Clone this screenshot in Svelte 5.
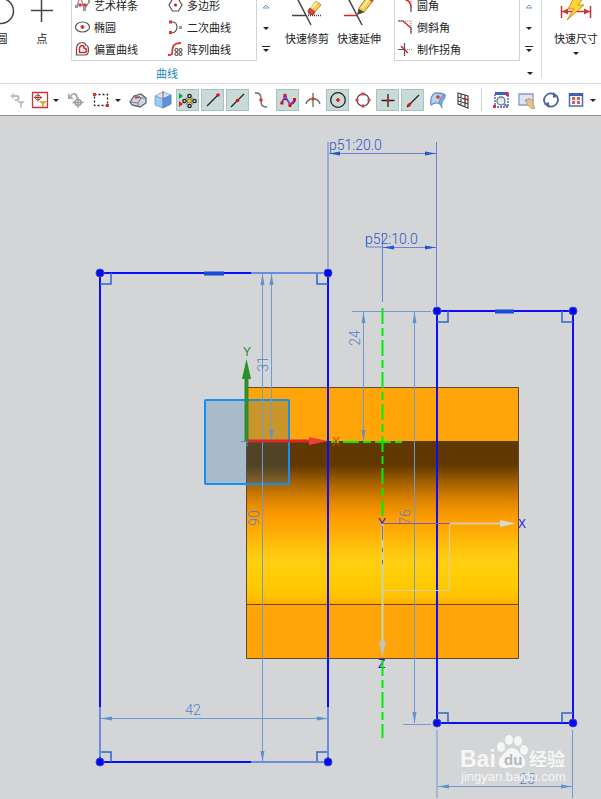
<script lang="ts">
	type Item = { icon: string; label: string };
	type Tool = { icon: string; label: string; active?: boolean; narrow?: boolean; menu?: boolean };

	const curves: Item[] = [
		{ icon: 'spline', label: '艺术样条' },
		{ icon: 'polygon', label: '多边形' },
		{ icon: 'ellipse', label: '椭圆' },
		{ icon: 'conic', label: '二次曲线' },
		{ icon: 'offset', label: '偏置曲线' },
		{ icon: 'pattern', label: '阵列曲线' }
	];

	const corners: Item[] = [
		{ icon: 'fillet', label: '圆角' },
		{ icon: 'chamfer', label: '倒斜角' },
		{ icon: 'corner', label: '制作拐角' }
	];

	const tools: Tool[] = [
		{ icon: 'resetFilter', label: '重置过滤器', narrow: true },
		{ icon: 'filter', label: '选择过滤器', narrow: true, menu: true },
		{ icon: 'undoPoint', label: '撤消选择' },
		{ icon: 'marquee', label: '矩形选择', menu: true },
		{ icon: 'solid', label: '实体' },
		{ icon: 'cube', label: '体' },
		{ icon: 'snap', label: '启用捕捉点', active: true },
		{ icon: 'endpoint', label: '端点', active: true },
		{ icon: 'midpoint', label: '中点', active: true },
		{ icon: 'control', label: '控制点' },
		{ icon: 'pole', label: '极点', active: true },
		{ icon: 'intersect', label: '交点' },
		{ icon: 'center', label: '圆弧中心', active: true },
		{ icon: 'quadrant', label: '象限点' },
		{ icon: 'existing', label: '现有点', active: true },
		{ icon: 'onCurve', label: '曲线上的点', active: true },
		{ icon: 'onFace', label: '面上的点' },
		{ icon: 'grid', label: '栅格点' }
	];

	const viewTools: Tool[] = [
		{ icon: 'fit', label: '适合窗口' },
		{ icon: 'pan', label: '平移' },
		{ icon: 'rotate', label: '旋转' },
		{ icon: 'window', label: '窗口', menu: true }
	];

	const frames = [
		{ left: 100, right: 328, top: 273, bottom: 762 },
		{ left: 437, right: 573, top: 311, bottom: 723 }
	];
</script>

{#snippet caret(bar = false, dim = false)}
	<svg class="caret" class:dim viewBox="0 0 8 8" aria-hidden="true">
		{#if bar}<path d="M0 0h8v1H0z" />{/if}
		{#if dim}<path d="M1 6h6L4 3z" />{:else}<path d="M1 3h6L4 6z" />{/if}
	</svg>
{/snippet}

{#snippet scroller(name: string)}
	<div class="scroller">
		<button aria-label="{name} 上一行">{@render caret(false, true)}</button>
		<button aria-label="{name} 下一行">{@render caret()}</button>
		<button aria-label="{name} 更多">{@render caret(true)}</button>
	</div>
{/snippet}

{#snippet itemIcon(name: string)}
	<svg class="item-icon" viewBox="0 0 16 16" fill="none" stroke="#555" stroke-width="1.2" aria-hidden="true">
		{#if name === 'spline'}
			<path d="M1 9C4 8 3 2 5 2s2 4 4 9c1 2 3-4 6-7" stroke="#888" />
			<path d="M0 8h3v3H0zM8 11h3v3H8zM13 3h2v3h-2z" fill="#999" stroke="none" />
			<path d="m5 8 5 0" stroke="#d33" />
			<circle cx="5" cy="8" r="1.7" fill="#d33" stroke="none" />
			<circle cx="10" cy="8" r="1.7" fill="#d33" stroke="none" />
		{:else if name === 'polygon'}
			<path d="M4.5 2h6L14 8l-3.500 6h-6L1 8z" />
			<circle cx="7.500" cy="8" r="1.6" fill="#c22" stroke="none" />
		{:else if name === 'ellipse'}
			<ellipse cx="7.500" cy="8" rx="7" ry="5" />
			<path d="M7.500 6v4M5.500 8h4" stroke="#c22" stroke-width="1.600" />
		{:else if name === 'conic'}
			<path d="M4 3c3 0 5 2 5 5s-2 6-5 6" />
			<path d="M1 1.500h3v3H1zM1 12h3v3H1z" fill="#d33" stroke="none" />
			<path d="M11 7h3v3h-3z" fill="#999" stroke="none" />
		{:else if name === 'offset'}
			<path d="M1.500 14V8c0-4 2-6.500 6-6.500 2 0 3 1 3.500 3 2 0 2.500 2 2.500 4.500s-1 5-3.500 5z" />
			<path d="M4.500 11.500V8c0-2 1-3.500 3-3.500 1 0 1.500 1 1.500 2.500 2 0 2.500 1 2.500 2.500s-1 2-2 2z" stroke="#d22" stroke-width="1.500" />
		{:else if name === 'pattern'}
			<path d="M0 14c5 0 4-1 4.500-6S8 2 13 2" stroke="#d33" stroke-width="1.800" />
			<circle cx="8.500" cy="9" r="1.500" /><circle cx="12.500" cy="9" r="1.500" />
			<circle cx="8.500" cy="13" r="1.500" /><circle cx="12.500" cy="13" r="1.500" />
		{:else if name === 'fillet'}
			<path d="M1 2h12v12" stroke="#888" stroke-dasharray="1 1" />
			<path d="M1 2h4M13 9v6" />
			<path d="M4 2c5 0 9 3 9 8" stroke="#d22" stroke-width="1.500" />
		{:else if name === 'chamfer'}
			<path d="M1 2h12v12" stroke="#888" stroke-dasharray="1 1" />
			<path d="M0 2h5M13 9v6" />
			<path d="m5 2 8 7" stroke="#d22" stroke-width="1.500" />
		{:else if name === 'corner'}
			<path d="M6.500 2v13M0 8.500h7" />
			<path d="M7 8.500h7" stroke="#888" stroke-dasharray="1 1" />
			<path d="m3 5 7 7" stroke="#d22" stroke-width="1.500" />
		{/if}
	</svg>
{/snippet}

{#snippet bigIcon(name: string)}
	<svg class="big-icon" viewBox="0 0 32 32" fill="none" stroke="#444" stroke-width="1.5" aria-hidden="true">
		{#if name === 'circle'}
			<circle cx="15" cy="15" r="12.500" />
		{:else if name === 'point'}
			<path d="M5 14.500h22M15.500 2v24" />
		{:else if name === 'trim'}
			<path d="m5 0 15 29M1 19.500h14" />
			<path d="M17 19.500h13" stroke-dasharray="1 1" />
			<path d="m18 14 7-9 5 4-7 8z" fill="#f5cf52" stroke="#b08a3a" stroke-width="1" />
			<path d="m20 13 6-7" stroke="#fff0a0" stroke-width="2" />
			<path d="m17 15 2-3 5 4-2 3-4-1z" fill="#d64545" stroke="#b33" stroke-width="1" />
		{:else if name === 'extend'}
			<path d="m4 0 15 29" />
			<path d="M1 19.500h13" stroke="#d22" />
			<path d="m15 18 1-6L24 1l6 4-9 11z" fill="#f8cf50" stroke="#a07830" stroke-width="1" />
			<path d="m19 12 7-9" stroke="#fff29a" stroke-width="2" />
			<path d="m14 19 2-6 5 3z" fill="#444" stroke="none" />
			<path d="m25 1 5 4" stroke="#d64545" stroke-width="3" />
		{:else if name === 'dimension'}
			<path d="M1.500 10v12M30.500 10v12M2 15.500h28" stroke="#c33" />
			<path d="m2 15.500 6-3v6zM30 15.500l-6-3v6z" fill="#c33" stroke="none" />
			<path d="m15 0-7 13h6L7 24l17-15h-6l7-9z" fill="#ffd335" stroke="#d38b20" stroke-width="1" />
		{/if}
	</svg>
{/snippet}

{#snippet toolIcon(name: string)}
	<svg class="tool-icon" viewBox="0 0 18 18" fill="none" stroke="#222" stroke-width="1.3" aria-hidden="true">
		{#if name === 'resetFilter'}
			<path d="M4 5h4c2 0 2 4 0 4H6" stroke="#bbb" stroke-width="2" />
			<path d="m1 5 4-3v6zM8 10h8l-3 3v4l-2-1v-3z" fill="#c4c4c4" stroke="none" />
		{:else if name === 'filter'}
			<path d="M1.500 1.500h15v15h-15z" fill="#fff" stroke="#cc3340" />
			<circle cx="7" cy="6.500" r="2.500" stroke="#844" stroke-width="1" />
			<path d="M7 2.500v8M3 6.500h8" stroke="#a33" stroke-width="1" />
			<path d="M8 10h8l-3 3v3l-2-1v-2z" fill="#e8a527" stroke="none" />
		{:else if name === 'undoPoint'}
			<path d="M4 5c1-3 6-3 6 2" stroke="#aaa" stroke-width="1.800" />
			<path d="M1 2v6h6z" fill="#aaa" stroke="none" />
			<circle cx="11" cy="11.500" r="3" stroke="#999" />
			<path d="M11 6v11M5.500 11.500h11" stroke="#999" />
		{:else if name === 'marquee'}
			<path d="M2.500 3.500h13v11h-13z" stroke-dasharray="2 2" />
			<path d="M1 2h3v3H1zM14 13h3v3h-3z" fill="#d33" stroke="none" />
		{:else if name === 'solid'}
			<path d="m1 11 4-6 7-2 5 4v5l-6 4-8-2z" fill="#d0d5df" stroke="#596174" />
			<path d="m1 11 8 1 3-5 5 0M9 12v4M5 5l7 2" stroke="#707a90" stroke-width="1" />
			<path d="m6 7 5-1" stroke="#c33" />
		{:else if name === 'cube'}
			<path d="m1 5 8-4 8 3-8 4z" fill="#cfe8ff" stroke="#7fa9dc" stroke-width="1" />
			<path d="M1 5v9l8 3V8z" fill="#9accf5" stroke="#7fa9dc" stroke-width="1" />
			<path d="M9 8v9l8-4V4z" fill="#5d91db" stroke="#5c88c8" stroke-width="1" />
			<path d="M9 0v8" stroke="#d33" stroke-width="1" />
		{:else if name === 'snap'}
			<path d="m0 2 4 3-4 3z" fill="#0a3" stroke="none" />
			<path d="m0 10 4 3-4 3z" fill="#d22" stroke="none" />
			<circle cx="10.500" cy="5" r="1.700" /><circle cx="10.500" cy="15" r="1.700" />
			<circle cx="5.500" cy="10" r="1.700" /><circle cx="15.500" cy="10" r="1.700" />
			<path d="m7 6.500 7 7M14 6.500l-7 7" stroke="#555" stroke-width="1" />
			<circle cx="10.500" cy="10" r="2" fill="#ffcf20" stroke="#a07a10" stroke-width="1" />
		{:else if name === 'endpoint'}
			<path d="M3 15 14 4" />
			<circle cx="14" cy="4" r="1.800" fill="#d11" stroke="none" />
		{:else if name === 'midpoint'}
			<path d="M2 16 15 3" />
			<circle cx="8.500" cy="9.500" r="1.800" fill="#d11" stroke="none" />
		{:else if name === 'control'}
			<path d="M1 2c5 0 6 1 6 7s1 7 6 7" stroke="#666" />
			<circle cx="7" cy="9" r="1.800" fill="#d33" stroke="none" />
		{:else if name === 'pole'}
			<path d="M2 13C4 7 7 7 9 10s4 5 7 0" />
			<path d="m3 12 3-8 5 10 5-6" stroke="#93c" stroke-width="1.600" />
			<path d="M1.500 10.500h3v3h-3zM4.500 3h3v3h-3zM9.500 13h3v3h-3zM14 7h3v3h-3z" fill="#d11" stroke="none" />
		{:else if name === 'intersect'}
			<path d="M9 2v14M2 13C4 6 14 6 16 13" stroke="#666" />
			<circle cx="9" cy="8" r="1.800" fill="#d33" stroke="none" />
		{:else if name === 'center'}
			<circle cx="9" cy="9" r="7.300" />
			<path d="M9 7v4M7 9h4" stroke="#d11" stroke-width="1.500" />
		{:else if name === 'quadrant'}
			<circle cx="9" cy="9" r="6" stroke="#555" />
			<path d="M7.500 1.500h3v3h-3zM7.500 13.500h3v3h-3zM1.500 7.500h3v3h-3zM13.500 7.500h3v3h-3z" fill="#d44" stroke="none" />
		{:else if name === 'existing'}
			<path d="M9 3v13M2.500 9.500h13" />
			<circle cx="9" cy="9.500" r="1.600" fill="#d11" stroke="none" />
		{:else if name === 'onCurve'}
			<path d="M3 16 15 4" />
			<circle cx="5" cy="14" r="1.800" fill="#d11" stroke="none" />
		{:else if name === 'onFace'}
			<path d="M2 14C1 8 3 3 6 2c4 0 8 0 10 2-4 1-6 5-5 9-3-2-6-1-9 1z" fill="#b5d3ee" stroke="#6b90c0" />
			<path d="m11 13 2 4c-1-4 1-8 3-10V4c-4 1-6 5-5 9z" fill="#86a9d2" stroke="#6b90c0" stroke-width="1" />
			<circle cx="9" cy="6" r="1.800" fill="#d33" stroke="none" />
		{:else if name === 'grid'}
			<path d="m4 2 10 3v12L4 13zM7 3v11M11 4v12M4 6l10 3M4 10l10 3" stroke="#444" stroke-width="1.200" />
			<circle cx="11" cy="8" r="1.600" fill="#d22" stroke="none" />
		{:else if name === 'fit'}
			<path d="M3 2h13v14H3z" stroke="#3352b5" stroke-dasharray="2 1" />
			<path d="M3 1h13v3H3z" fill="#3e61bb" stroke="none" />
			<circle cx="9" cy="10" r="4" fill="#e4eff5" stroke="#6d7b86" />
			<path d="m12 13 4 3" stroke="#6d7b86" stroke-width="2" />
			<path d="M14 2h3v3h-3zM1 14h3v3H1z" fill="#d33" stroke="none" />
		{:else if name === 'pan'}
			<path d="M2 3h14v11H2z" fill="#d9e4f6" stroke="#8c9bc5" />
			<path d="m8 9 2 1-1-2 2 1 1-2 2 2 2 0v5l2 3-3 1-4-4z" fill="#e8c48c" stroke="#c39a60" stroke-width="1" />
		{:else if name === 'rotate'}
			<path d="M3.500 13A6.500 6.500 0 0 1 12 3.500M14.500 5A6.500 6.500 0 0 1 6 14.500" stroke="#4d6496" stroke-width="1.800" />
			<path d="m11 1 5 4-5 2zM7 17l-5-4 5-2z" fill="#4d6496" stroke="none" />
		{:else if name === 'window'}
			<path d="M2.500 3h13v12h-13z" fill="#fff" stroke="#456eb5" stroke-width="1.500" />
			<path d="M2 2h14v3H2z" fill="#3e61bb" stroke="none" />
			<path d="M5 6h3v3H5zM10 6h3v3h-3zM5 10h3v3H5zM10 10h3v3h-3z" fill="#dc5a52" stroke="none" />
		{/if}
	</svg>
{/snippet}

{#snippet bigButton(icon: string, label: string)}
	<button class="big">
		{@render bigIcon(icon)}
		<span>{label}</span>
	</button>
{/snippet}

{#snippet toolButtons(list: Tool[])}
	{#each list as tool}
		<button class="tool" class:active={tool.active} class:narrow={tool.narrow} aria-label={tool.label}>
			{@render toolIcon(tool.icon)}
		</button>
		{#if tool.menu}
			<button class="tool-menu" aria-label="{tool.label} 菜单">{@render caret()}</button>
		{/if}
	{/each}
{/snippet}

<div class="app">
	<header class="ribbon">
		<section class="group">
			<div class="group-body">
				<div class="bigs primitives">
					{@render bigButton('circle', '圆')}
					{@render bigButton('point', '点')}
				</div>
				<div class="gallery two-columns">
					{#each curves as item}
						<button class="item">{@render itemIcon(item.icon)}{item.label}</button>
					{/each}
				</div>
				{@render scroller('曲线')}
				<div class="bigs edit">
					{@render bigButton('trim', '快速修剪')}
					{@render bigButton('extend', '快速延伸')}
				</div>
				<div class="gallery">
					{#each corners as item}
						<button class="item">{@render itemIcon(item.icon)}{item.label}</button>
					{/each}
				</div>
				{@render scroller('拐角')}
			</div>
			<footer class="group-footer">
				<span>曲线</span>
				<button class="tool-menu" aria-label="曲线选项">{@render caret()}</button>
			</footer>
		</section>
		<section class="group dimension">
			<button class="big with-menu">
				{@render bigIcon('dimension')}
				<span>快速尺寸</span>
				{@render caret()}
			</button>
		</section>
	</header>

	<nav class="toolbar">
		{@render toolButtons(tools)}
		<span class="divider"></span>
		{@render toolButtons(viewTools)}
	</nav>

	<main class="canvas">
		<svg class="drawing" viewBox="0 116 601 683" role="img" aria-label="草图">
			<defs>
				<linearGradient id="bore" x1="0" y1="0" x2="0" y2="1">
					<stop offset="0" stop-color="#613900" />
					<stop offset="0.150" stop-color="#613900" />
					<stop offset="0.260" stop-color="#a86300" />
					<stop offset="0.370" stop-color="#e08500" />
					<stop offset="0.460" stop-color="#fc9c00" />
					<stop offset="0.550" stop-color="#ffab05" />
					<stop offset="0.680" stop-color="#ffc80f" />
					<stop offset="0.750" stop-color="#ffcf0f" />
					<stop offset="0.900" stop-color="#ffc900" />
					<stop offset="0.960" stop-color="#ffc000" />
					<stop offset="1" stop-color="#ffac00" />
				</linearGradient>
				<marker id="arrow" viewBox="0 0 11 6" refX="11" refY="3" markerWidth="11" markerHeight="6" markerUnits="userSpaceOnUse" orient="auto-start-reverse">
					<path d="M0 1 11 3 0 5z" fill="#5b92cf" />
				</marker>
				<marker id="arrow-dark" viewBox="0 0 11 6" refX="11" refY="3" markerWidth="11" markerHeight="6" markerUnits="userSpaceOnUse" orient="auto-start-reverse">
					<path d="M0 1 11 3 0 5z" fill="#2456cc" />
				</marker>
			</defs>

			<!-- solid body -->
			<rect x="246.500" y="387.500" width="272" height="271" fill="#ffa509" />
			<rect x="247" y="441" width="271" height="163" fill="url(#bore)" />
			<path class="edge" d="M246.500 387.500h272v271h-272zM247 604.500h271" />

			<!-- datum plane -->
			<rect class="datum" x="205" y="400" width="84" height="84" rx="1" />

			<!-- coordinate system labels behind the center line -->
			<text class="axis" x="378" y="527" fill="#1414c8">Y</text>
			<text class="axis" x="378" y="668" fill="#2020dc">Z</text>

			<!-- center lines -->
			<path class="centerline" d="M382.500 308v212" />
			<path class="centerline" d="M382.500 660v78" />
			<path class="centerline level" d="M330 442h72" />

			<!-- dimensions -->
			<g class="dim">
				<path d="M101 718.500h227" marker-start="url(#arrow)" marker-end="url(#arrow)" />
				<path d="M262.500 274v488" marker-start="url(#arrow)" marker-end="url(#arrow)" />
				<path d="M271.500 274v167" marker-start="url(#arrow)" marker-end="url(#arrow)" />
				<path d="M363.500 312v129" marker-start="url(#arrow)" marker-end="url(#arrow)" />
				<path d="M414.500 312v411" marker-start="url(#arrow)" marker-end="url(#arrow)" />
				<path d="M438 786.500h134" marker-start="url(#arrow)" marker-end="url(#arrow)" />
				<path d="M352 311.500h79M403 724.500h28M437 730v68M572.500 730v68" />
			</g>
			<g class="dim dark">
				<path d="M328 142v126M436.500 142v164M366.500 236v11h16M382.500 233v69" />
				<path d="M329 153.500h107" marker-start="url(#arrow-dark)" marker-end="url(#arrow-dark)" />
				<path d="M383 247.500h53" marker-start="url(#arrow-dark)" marker-end="url(#arrow-dark)" />
			</g>
			<g class="value dark">
				<text x="329" y="150">p51:20.0</text>
				<text x="365" y="244">p52:10.0</text>
			</g>
			<g class="value" text-anchor="middle">
				<text x="193" y="715">42</text>
				<text x="527" y="784">25</text>
				<text transform="translate(268 364) rotate(-90)">31</text>
				<text transform="translate(360 338) rotate(-90)">24</text>
				<text transform="translate(259 518) rotate(-90)">90</text>
				<text transform="translate(410 517) rotate(-90)">76</text>
			</g>

			<!-- sketch profiles -->
			{#each frames as f}
				<rect class="profile" x={f.left} y={f.top} width={f.right - f.left} height={f.bottom - f.top} />
				<path
					class="square"
					d="M{f.left} {f.top + 11}h11v-11M{f.right} {f.top + 11}h-11v-11M{f.left} {f.bottom - 10}h11v10M{f.right} {f.bottom - 10}h-11v10"
				/>
				{#each [f.left, f.right] as x}
					{#each [f.top, f.bottom] as y}
						<circle class="vertex" cx={x} cy={y} r="4" />
					{/each}
				{/each}
			{/each}
			<path class="shared" d="M251 273h73M251 762h73M100 707v50M328 707v50" />
			<path class="horizontal-mark" d="M204 273.500h20M495 311.500h19" />

			<!-- sketch axes -->
			<path d="M246.500 441V378" stroke="#2f8d2f" stroke-width="4" />
			<path d="m242 379 4.500-20 4.500 20z" fill="#269226" />
			<path d="M247 441h63" stroke="#d52b2b" stroke-width="3" />
			<path d="m309 437 19 4-19 4z" fill="#ec3f3a" />
			<path d="M241 441.500h6v5" fill="none" stroke="#45a0a0" />
			<text class="axis" x="243" y="356" fill="#238a23">Y</text>
			<text class="axis" x="332" y="446" fill="#d23a20">X</text>

			<!-- work coordinate system -->
			<path d="M382.500 524v119" stroke="#c5d8b5" stroke-width="2" />
			<path d="M382.500 526v14M382.500 548v4M382.500 560v4" stroke="#7d66ba" />
			<path d="M382 523.500h68" stroke="#8452b8" />
			<path d="M450 523.500h50" stroke="#dec9ac" stroke-width="2" />
			<path d="m500 520 16 3.500-16 3.500z" fill="#d9d9d6" />
			<path d="m379 641 3.500 16 3.500-16z" fill="#c3c3c3" />
			<path d="M449.500 524v66.500h-67" fill="none" stroke="#dccfa8" />
			<text class="axis" x="518" y="528" fill="#2020dc">X</text>

			<!-- watermark -->
			<g class="watermark">
				<text class="brand" x="460" y="767">Bai</text>
				<ellipse cx="501" cy="747" rx="4" ry="5" />
				<ellipse cx="509" cy="740" rx="4" ry="5" />
				<ellipse cx="518" cy="741" rx="4" ry="5" />
				<ellipse cx="524" cy="750" rx="4" ry="5" />
				<path d="M512 748c5 0 7 5 11 9s3 11-3 11c-3 0-5-1-8-1s-5 1-8 1c-6 0-7-7-3-11s6-9 11-9z" />
				<text class="du" x="504" y="765">du</text>
				<text class="jingyan" x="529" y="766">经验</text>
				<text class="site" x="461" y="781">jingyan.baidu.com</text>
			</g>
		</svg>
	</main>
</div>

<style>
	:global(body) {
		margin: 0;
		background: #d3d5d6;
	}

	.app {
		font-family: 'Liberation Sans', 'Noto Sans CJK SC', sans-serif;
		font-size: 11px;
		color: #222;
		overflow: hidden;
	}

	button {
		margin: 0;
		padding: 0;
		border: none;
		background: transparent;
		font: inherit;
		color: inherit;
		cursor: pointer;
	}

	svg {
		display: block;
		flex: none;
	}

	/* Ribbon */
	.ribbon {
		display: flex;
		height: 83px;
		background: #fff;
		border-bottom: 1px solid #d8dadb;
		overflow: hidden;
	}

	.group {
		display: flex;
		flex-direction: column;
		flex: none;
		padding-right: 4px;
	}

	.group-body {
		display: flex;
		align-items: flex-end;
		height: 61px;
	}

	.group-footer {
		display: flex;
		align-items: center;
		justify-content: space-between;
		height: 22px;
		padding: 2px 1px 0 156px;
		box-sizing: border-box;
		color: #2086b4;
	}

	.bigs {
		display: flex;
		padding-bottom: 14px;
	}

	.primitives {
		margin-left: -18px;
		padding-right: 9px;
	}

	.edit {
		padding-left: 7px;
		padding-right: 9px;
	}

	.big {
		display: flex;
		flex-direction: column;
		align-items: center;
		gap: 3px;
		width: 40px;
		line-height: 16px;
		white-space: nowrap;
	}

	.edit .big {
		width: 52px;
	}

	.big-icon {
		width: 32px;
		height: 32px;
		overflow: visible;
	}

	.gallery {
		display: grid;
		grid-template-columns: 121px;
		grid-auto-rows: 22px;
		padding-left: 3px;
		border: 1px solid #d2d4d6;
	}

	.two-columns {
		grid-template-columns: 93px 88px;
	}

	.item {
		display: flex;
		align-items: center;
		gap: 3px;
		white-space: nowrap;
	}

	.item-icon {
		width: 16px;
		height: 16px;
	}

	.scroller {
		display: grid;
		grid-auto-rows: 22px;
		width: 17px;
	}

	.scroller button,
	.tool-menu {
		display: flex;
		align-items: center;
		justify-content: center;
	}

	.caret {
		width: 8px;
		height: 8px;
		fill: #222;
	}

	.caret.dim {
		fill: #a8a8a8;
	}

	.dimension {
		height: 78px;
		padding-left: 9px;
		border-left: 1px solid #d8dadb;
	}

	.dimension .big {
		width: 50px;
		height: 57px;
		justify-content: flex-end;
	}

	.with-menu .caret {
		margin-top: -1px;
	}

	/* Snap and view toolbar */
	.toolbar {
		display: flex;
		align-items: center;
		gap: 2px;
		height: 31px;
		padding-left: 8px;
		background: #fff;
		border-bottom: 1px solid #8d8f90;
	}

	.tool {
		display: flex;
		align-items: center;
		justify-content: center;
		flex: none;
		box-sizing: border-box;
		width: 23px;
		height: 22px;
	}

	.tool.narrow {
		width: 20px;
	}

	.tool.active {
		background: #cadad8;
		border: 1px solid #a5c4c0;
	}

	.tool-icon {
		width: 18px;
		height: 18px;
	}

	.tool-menu {
		flex: none;
		width: 12px;
		height: 16px;
	}

	.toolbar .tool-menu {
		margin-left: -2px;
	}

	.divider {
		width: 1px;
		height: 23px;
		margin: 0 5px;
		background: #d2d4d6;
	}

	/* Drawing area */
	.canvas {
		background: #d3d5d6;
	}

	.drawing {
		width: 100%;
		height: auto;
	}

	.edge {
		fill: none;
		stroke: #5f4a35;
	}

	.datum {
		fill: #1868a6;
		fill-opacity: 0.23;
		stroke: #168ff5;
		stroke-width: 2;
	}

	.centerline {
		stroke: #00f000;
		stroke-width: 2;
		stroke-dasharray: 16 4 8 4;
	}

	.centerline.level {
		stroke-dashoffset: 19;
	}

	.dim path {
		fill: none;
		stroke: #6f9bd0;
	}

	.dim.dark path {
		stroke: #6c82d0;
	}

	.value {
		font-family: Roboto, 'Liberation Sans', sans-serif;
		font-size: 14px;
		font-weight: 300;
		fill: #5583c8;
	}

	.value.dark {
		fill: #2d58c8;
	}

	.profile {
		fill: none;
		stroke: #0d0dfa;
		stroke-width: 2;
	}

	.square {
		fill: none;
		stroke: #2e66cc;
		stroke-width: 1.5;
	}

	.vertex {
		fill: #0707f5;
		stroke: #2d50c4;
	}

	.shared {
		stroke: #6b8ae6;
		stroke-width: 2;
	}

	.horizontal-mark {
		stroke: #174bd8;
		stroke-width: 4;
	}

	.axis {
		font-size: 12px;
	}

	.watermark {
		fill: #f5f6f6;
	}

	.brand {
		font-size: 23px;
		font-weight: 700;
	}

	.du {
		font-size: 15px;
		font-weight: 700;
		fill: #b4b6b8;
	}

	.jingyan {
		font-size: 18px;
		font-weight: 700;
	}

	.site {
		font-size: 13px;
	}
</style>
